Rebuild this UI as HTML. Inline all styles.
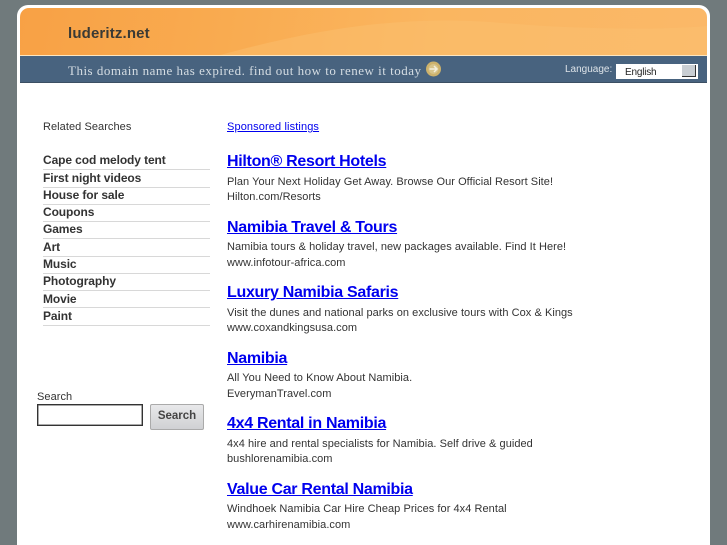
<!DOCTYPE html>
<html><head><meta charset="utf-8"><style>
html,body{margin:0;padding:0;width:727px;height:545px;overflow:hidden;background:#707a7c;font-family:"Liberation Sans",sans-serif}
div,a,span{position:absolute;white-space:nowrap}
a{color:#0000ee}
#w{left:0;top:0;width:727px;height:545px;overflow:hidden;filter:blur(.3px)}
#card{left:17px;top:5px;width:693px;height:560px;background:#fff;border-radius:11px 11px 0 0}
#or{left:20px;top:8px;width:687px;height:47px;border-radius:9px 9px 0 0;overflow:hidden;background:linear-gradient(100deg,#f8a145 0%,#f9ab50 30%,#fab660 60%,#fbb868 100%)}
#ln{left:20px;top:55px;width:687px;height:1px;background:#fde6c0}
#bl{left:20px;top:56px;width:687px;height:26px;background:#48637f;border-bottom:1px solid #3b4f63}
.s{font-size:11px;color:#333;line-height:14px;letter-spacing:.06px}
.c{left:43px;font-size:12px;font-weight:bold;color:#333;line-height:14px;letter-spacing:-.1px}
.r{left:43px;width:167px;height:1px;background:#d8d8d8}
.h{left:227px;font-size:16px;font-weight:bold;line-height:18px;letter-spacing:-.3px}
.d{left:227px;font-size:11px;color:#333;line-height:14px;letter-spacing:.05px}
</style></head><body><div id="w">
<div id="card"></div>
<div id="or"><svg style="position:absolute;left:0;top:0" width="687" height="47" viewBox="0 0 687 47"><path d="M200 47C300 20 380 8 470 14C560 22 640 22 687 18V47Z" fill="#fbc272" opacity=".45"/></svg></div>
<div id="ln"></div><div id="bl"></div>
<div style="left:68px;top:25px;font-size:15px;font-weight:bold;color:#3a3a35;line-height:18px;letter-spacing:.15px">luderitz.net</div>
<div style="left:68px;top:63px;font-family:'Liberation Serif',serif;font-size:13px;letter-spacing:.5px;color:#d5dde3;line-height:16px">This domain name has expired. find out how to renew it today</div>
<svg style="position:absolute;left:425px;top:61px" width="17" height="16" viewBox="0 0 17 16"><circle cx="8.500" cy="8" r="7.500" fill="#cdb26c"/><circle cx="8.500" cy="8" r="5" fill="#d8c48a"/><path d="M4.500 8H12M9 5l3 3-3 3" fill="none" stroke="#f4efdc" stroke-width="1.500"/></svg>
<div style="left:565px;top:63px;font-size:10px;color:#dde3e8;line-height:13px">Language:</div>
<div style="left:616px;top:64px;width:82px;height:15px;background:#fff"></div>
<div style="left:625px;top:66px;font-size:10px;color:#222;line-height:14px;letter-spacing:-.2px">English</div>
<div style="left:682px;top:65px;width:13px;height:11px;background:#c9ced3;border-right:1px solid #333;border-bottom:1px solid #333"></div>

<div class="s" style="left:43px;top:120px">Related Searches</div>
<div class="c" style="top:153px">Cape cod melody tent</div><div class="r" style="top:169px"></div>
<div class="c" style="top:171px">First night videos</div><div class="r" style="top:187px"></div>
<div class="c" style="top:188px">House for sale</div><div class="r" style="top:204px"></div>
<div class="c" style="top:205px">Coupons</div><div class="r" style="top:221px"></div>
<div class="c" style="top:222px">Games</div><div class="r" style="top:238px"></div>
<div class="c" style="top:240px">Art</div><div class="r" style="top:256px"></div>
<div class="c" style="top:257px">Music</div><div class="r" style="top:273px"></div>
<div class="c" style="top:274px">Photography</div><div class="r" style="top:290px"></div>
<div class="c" style="top:292px">Movie</div><div class="r" style="top:307px"></div>
<div class="c" style="top:309px">Paint</div><div class="r" style="top:325px"></div>

<div class="s" style="left:37px;top:390px">Search</div>
<div style="left:37px;top:404px;width:104px;height:20px;border:1px solid #333;box-shadow:inset 0 0 0 .5px #555;background:#fff"></div>
<div style="left:150px;top:404px;width:52px;height:24px;border:1px solid #aaa;border-radius:2px;background:linear-gradient(#e8e8ea,#cfd0d3);color:#444;font-size:11.500px;font-weight:bold;text-align:center;line-height:23px">Search</div>

<a class="s" href="#" style="left:227px;top:120px;color:#0000ee;letter-spacing:.12px">Sponsored listings</a>

<a class="h" href="#" style="top:153px">Hilton® Resort Hotels</a>
<div class="d" style="top:175px">Plan Your Next Holiday Get Away. Browse Our Official Resort Site!</div>
<div class="d" style="top:190px">Hilton.com/Resorts</div>

<a class="h" href="#" style="top:219px">Namibia Travel &amp; Tours</a>
<div class="d" style="top:240px">Namibia tours &amp; holiday travel, new packages available. Find It Here!</div>
<div class="d" style="top:256px">www.infotour-africa.com</div>

<a class="h" href="#" style="top:284px">Luxury Namibia Safaris</a>
<div class="d" style="top:306px">Visit the dunes and national parks on exclusive tours with Cox &amp; Kings</div>
<div class="d" style="top:321px">www.coxandkingsusa.com</div>

<a class="h" href="#" style="top:350px">Namibia</a>
<div class="d" style="top:371px">All You Need to Know About Namibia.</div>
<div class="d" style="top:387px">EverymanTravel.com</div>

<a class="h" href="#" style="top:415px">4x4 Rental in Namibia</a>
<div class="d" style="top:437px">4x4 hire and rental specialists for Namibia. Self drive &amp; guided</div>
<div class="d" style="top:452px">bushlorenamibia.com</div>

<a class="h" href="#" style="top:481px">Value Car Rental Namibia</a>
<div class="d" style="top:502px">Windhoek Namibia Car Hire Cheap Prices for 4x4 Rental</div>
<div class="d" style="top:518px">www.carhirenamibia.com</div>
</div></body></html>
